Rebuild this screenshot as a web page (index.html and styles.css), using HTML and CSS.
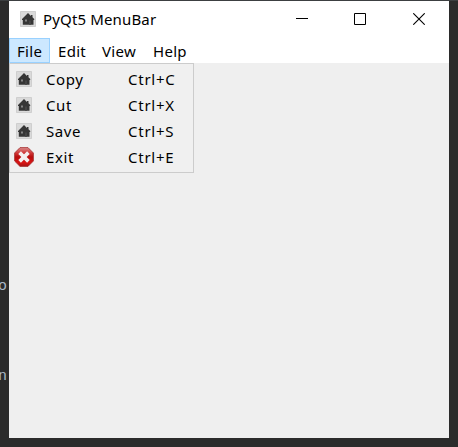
FILE: index.html
```html
<!DOCTYPE html>
<html lang="en">
<head>
<meta charset="utf-8">
<title>PyQt5 MenuBar</title>
<link rel="stylesheet" href="styles.css">
</head>
<body>
<svg class="defs" width="0" height="0" aria-hidden="true">
  <symbol id="home" viewBox="0 0 16 16">
    <rect width="16" height="16" rx=".7" fill="#cfcfcf"/>
    <rect x="1" y="1" width="14" height="14" fill="#dadada"/>
    <path d="M8 2 2 8v1h.8v4.7h10.7V9h.7V8L12.5 6.3V4H11v1z" fill="#363636"/>
    <path d="M5 8.5h2v2H5z" fill="#858585"/>
    <path d="M9 9.5h2v4.2H9z" fill="#454545"/>
  </symbol>
</svg>
<span class="backdrop-text backdrop-upper">o</span>
<span class="backdrop-text backdrop-lower">n</span>
<main class="window">
  <header class="titlebar">
    <svg class="app-icon"><use href="#home"/></svg>
    <h1 class="title">PyQt5 MenuBar</h1>
    <div class="controls">
      <svg width="12" height="12"><path d="M0 5.5h12" stroke="#000"/></svg>
      <svg width="12" height="12"><path d="M.5.5h11v11H.5z" fill="none" stroke="#000"/></svg>
      <svg width="12" height="12"><path d="M.3.3l11.4 11.4M11.7.3.3 11.7" stroke="#000" stroke-width="1.1"/></svg>
    </div>
  </header>
  <nav class="menubar">
    <span class="menu active">File</span>
    <span class="menu edit">Edit</span>
    <span class="menu view">View</span>
    <span class="menu help">Help</span>
  </nav>
  <ul class="dropdown">
    <li class="item"><svg class="icon"><use href="#home"/></svg><span class="label">Copy</span><span class="shortcut">Ctrl+C</span></li>
    <li class="item"><svg class="icon"><use href="#home"/></svg><span class="label">Cut</span><span class="shortcut">Ctrl+X</span></li>
    <li class="item"><svg class="icon"><use href="#home"/></svg><span class="label">Save</span><span class="shortcut">Ctrl+S</span></li>
    <li class="item">
      <svg class="icon exit" viewBox="0 0 20 20">
        <defs>
          <linearGradient id="red" x2="0" y2="1">
            <stop offset="0" stop-color="#d98b8b"/>
            <stop offset=".3" stop-color="#cf3434"/>
            <stop offset=".5" stop-color="#b80d0d"/>
            <stop offset=".8" stop-color="#d91515"/>
            <stop offset="1" stop-color="#a51212"/>
          </linearGradient>
        </defs>
        <path d="M6 .6h8L19.4 6v8L14 19.4H6L.6 14V6z" fill="url(#red)" stroke="#a33030" stroke-width=".8"/>
        <path d="M5.6 5.6l8.8 8.8M14.4 5.6l-8.8 8.8" stroke="#f4f0f0" stroke-width="3.7"/>
      </svg>
      <span class="label">Exit</span><span class="shortcut">Ctrl+E</span></li>
  </ul>
</main>
</body>
</html>
```
FILE: styles.css
```css
* { box-sizing: border-box; }
body {
  margin: 0;
  height: 447px;
  padding: 1px 9px 9px;
  overflow: hidden;
  background: #2b2b2b;
  box-shadow: inset 0 1px #3c3f41;
  color: #000;
  font: 15px/20px "Noto Sans", "Open Sans", sans-serif;
}
.defs { position: absolute; }
.backdrop-text {
  position: absolute;
  left: -2px;
  color: #a9b7c6;
  font: 15px/20px "Liberation Mono", monospace;
}
.backdrop-upper { top: 277px; }
.backdrop-lower { top: 367px; }
.window {
  width: 440px;
  height: 437px;
  background: #efefef;
}
.titlebar {
  display: flex;
  align-items: center;
  height: 37px;
  padding: 0 24px 1px 11px;
  background: #fff;
}
.app-icon { width: 16px; height: 16px; }
.title {
  margin: 0 0 0 7px;
  font-size: 15px;
  font-weight: 400;
  letter-spacing: .15px;
}
.controls {
  display: flex;
  margin-left: auto;
}
.controls svg + svg { margin-left: 46px; }
.controls svg:last-child { margin-left: 47px; }
.menubar {
  display: flex;
  height: 25px;
  background: #fff;
  letter-spacing: .3px;
}
.menu {
  width: 44px;
  padding-left: 8px;
  line-height: 26px;
}
.menu.active {
  width: 41px;
  padding-left: 7px;
  border: 1px solid #99d1ff;
  background: #cce8ff;
  line-height: 24px;
}
.menu.view { width: 51px; }
.dropdown {
  width: 185px;
  height: 110px;
  margin: 0;
  padding: 2px 0 4px;
  border: 1px solid #ccc;
  background: #f0f0f0;
  list-style: none;
}
.item {
  display: grid;
  grid-template-columns: 36px 82px 1fr;
  align-items: center;
  height: 26px;
}
.label { letter-spacing: .6px; }
.shortcut { letter-spacing: .75px; }
.icon { width: 16px; height: 16px; margin-left: 6px; }
.icon.exit { width: 20px; height: 20px; margin-left: 4px; }
```
